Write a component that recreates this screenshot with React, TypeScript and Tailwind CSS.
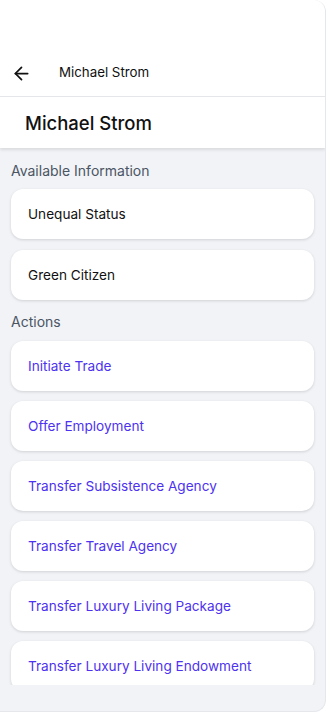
import { ArrowLeft } from "lucide-react";

const info = ["Unequal Status", "Green Citizen"];
const actions = [
  "Initiate Trade",
  "Offer Employment",
  "Transfer Subsistence Agency",
  "Transfer Travel Agency",
  "Transfer Luxury Living Package",
  "Transfer Luxury Living Endowment",
];

function Card({ label, action }: { label: string; action?: boolean }) {
  return (
    <div className="flex h-[50px] shrink-0 items-center rounded-xl bg-white px-[17px] shadow-[0_1px_3px_rgba(0,0,0,0.14)]">
      <span className={action ? "text-[13.6px] text-[#4d32ef]" : "text-[13.6px] text-[#111]"}>{label}</span>
    </div>
  );
}

export default function App() {
  return (
    <div className="h-[713px] w-[327px] bg-white font-['Inter',sans-serif]">
      <div className="flex h-[712px] w-[326px] flex-col overflow-hidden rounded-br-xl rounded-tr-xl border-r border-b border-gray-200 bg-[#f1f3f7]">
        <div className="shrink-0 bg-white">
          <div className="flex h-[97px] items-end border-b border-gray-200 pb-[11px]">
            <div className="flex h-[24px] items-center">
              <ArrowLeft className="ml-[11px] h-[21px] w-[21px] text-[#111]" strokeWidth={2} />
              <span className="ml-[27px] text-[13.3px] text-[#111]">Michael Strom</span>
            </div>
          </div>
          <div className="flex h-[51px] items-center px-[25px] pt-[3px] shadow-[0_2px_3px_rgba(0,0,0,0.1)]">
            <h1 className="text-[18.5px] font-medium text-[#111]">Michael Strom</h1>
          </div>
        </div>

        <div className="flex h-[537px] shrink-0 flex-col overflow-hidden px-[11px]">
          <p className="mt-[15px] mb-[10px] text-[14px] leading-[16px] text-[#4b5563]">Available Information</p>
          <div className="flex flex-col gap-[11px]">
            {info.map((i) => (
              <Card key={i} label={i} />
            ))}
          </div>
          <p className="mt-[14px] mb-[11px] text-[14px] leading-[16px] text-[#4b5563]">Actions</p>
          <div className="flex flex-col gap-[10px]">
            {actions.map((a) => (
              <Card key={a} label={a} action />
            ))}
          </div>
        </div>
      </div>
    </div>
  );
}
